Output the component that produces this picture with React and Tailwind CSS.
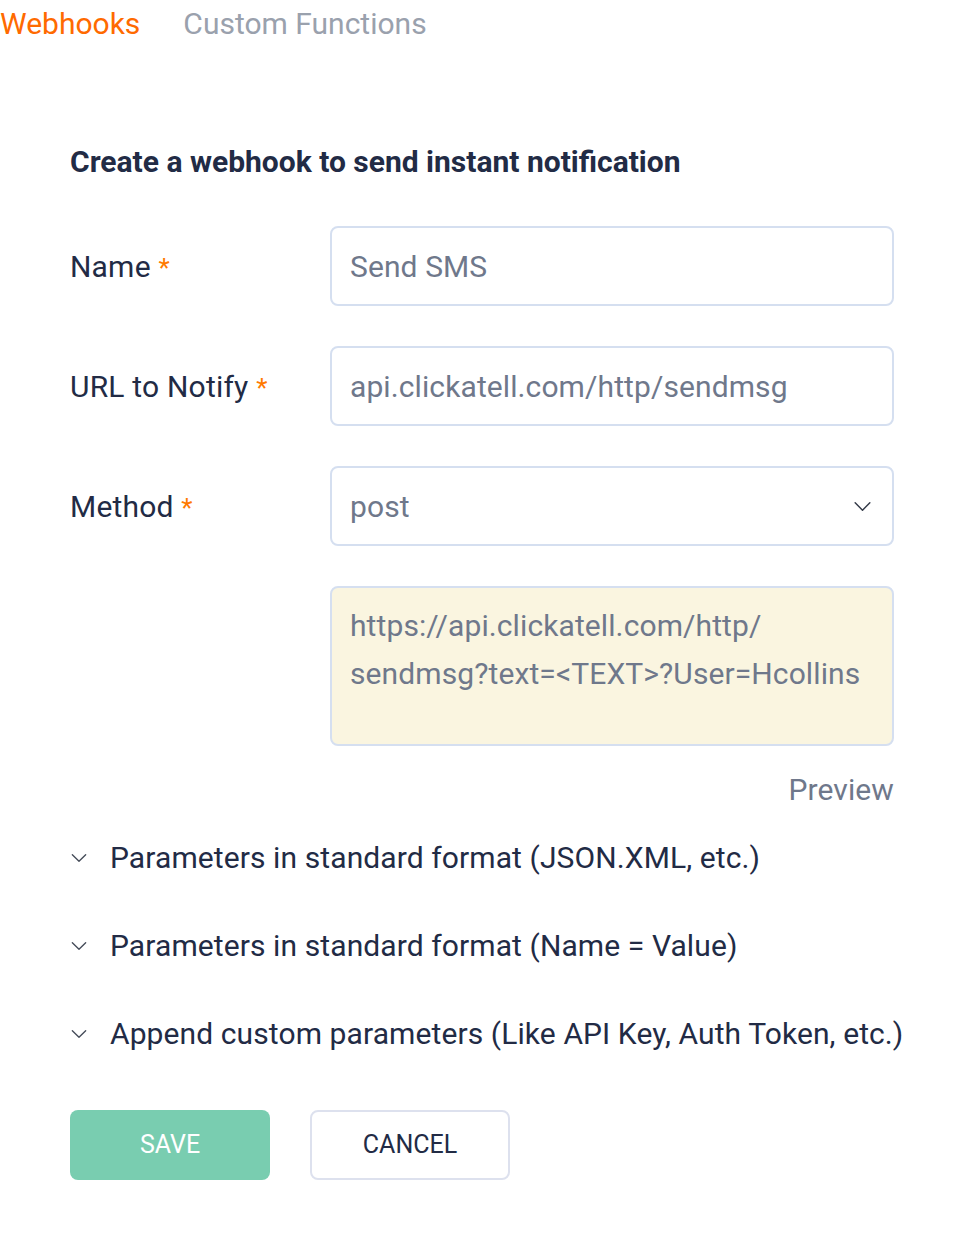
// Webhook creation form
import { useState } from 'react';

const Chevron = ({ className }) => (
  <svg className={className} viewBox="0 0 20 12" fill="none" stroke="currentColor" strokeWidth="1.6" strokeLinecap="round" strokeLinejoin="round">
    <path d="M2 2l8 8 8-8" />
  </svg>
);

const Field = ({ label, children }) => (
  <div className="flex items-center">
    <label className="w-[260px] shrink-0 text-[30px] tracking-[0.2px] text-[#222b45]">
      {label} <span className="text-[26px] text-[#ff7a00]">*</span>
    </label>
    {children}
  </div>
);

export default function App() {
  const [tab, setTab] = useState('webhooks');

  return (
    <div className="min-h-screen bg-white font-['Roboto',sans-serif]">
      {/* Tabs */}
      <div className="flex gap-[43px] text-[30px] leading-[48px]">
        <button className={tab === 'webhooks' ? 'text-[#ff6a00]' : 'text-[#9aa1ad]'} onClick={() => setTab('webhooks')}>
          Webhooks
        </button>
        <button className={tab === 'custom' ? 'text-[#ff6a00]' : 'text-[#9aa1ad]'} onClick={() => setTab('custom')}>
          Custom Functions
        </button>
      </div>

      <div className="pl-[70px] pr-[60px] pt-[90px]">
        <h2 className="text-[30px] font-bold leading-[48px] text-[#222b45]">Create a webhook to send instant notification</h2>

        <div className="mt-[40px] flex w-[824px] flex-col gap-[40px]">
          <Field label="Name">
            <div className="flex h-[80px] flex-1 items-center rounded-[8px] border-2 border-[#d5dff0] px-[18px] text-[30px] tracking-[0.1px] text-[#6f788b]">
              Send SMS
            </div>
          </Field>
          <Field label="URL to Notify">
            <div className="flex h-[80px] flex-1 items-center rounded-[8px] border-2 border-[#d5dff0] px-[18px] text-[30px] tracking-[0.1px] text-[#6f788b]">
              api.clickatell.com/http/sendmsg
            </div>
          </Field>
          <Field label="Method">
            <div className="flex h-[80px] flex-1 items-center justify-between rounded-[8px] border-2 border-[#d5dff0] pl-[18px] pr-[20px] text-[30px] tracking-[0.1px] text-[#6f788b]">
              post
              <Chevron className="h-[11px] w-[19px] text-[#333a48]" />
            </div>
          </Field>
          <div className="flex">
            <div className="w-[260px] shrink-0" />
            <div className="h-[160px] flex-1 rounded-[8px] border-2 border-[#d5dff0] bg-[#faf5e0] px-[18px] pt-[14px] text-[30px] leading-[48px] tracking-[0.1px] text-[#6f788b]">
              https://api.clickatell.com/http/
              <br />
              sendmsg?text=&lt;TEXT&gt;?User=Hcollins
            </div>
          </div>
        </div>

        <div className="mt-[24px] w-[824px] text-right text-[30px] leading-[40px] tracking-[0.1px] text-[#6f788b]">Preview</div>

        <div className="mt-[24px] flex flex-col gap-[40px]">
          {[
            'Parameters in standard format (JSON.XML, etc.)',
            'Parameters in standard format (Name = Value)',
            'Append custom parameters (Like API Key, Auth Token, etc.)',
          ].map((t) => (
            <div key={t} className="flex items-center gap-[22px] whitespace-nowrap text-[30px] leading-[48px] tracking-[0.1px] text-[#222b45]">
              <Chevron className="h-[10px] w-[18px] text-[#444b58]" />
              {t}
            </div>
          ))}
        </div>

        <div className="mt-[52px] flex gap-[40px]">
          <button className="h-[70px] w-[200px] rounded-[8px] bg-[#79cdb0] text-[25px] text-white">SAVE</button>
          <button className="h-[70px] w-[200px] rounded-[8px] border-2 border-[#dde1ee] bg-white text-[25px] text-[#222b45]">CANCEL</button>
        </div>
      </div>
    </div>
  );
}
